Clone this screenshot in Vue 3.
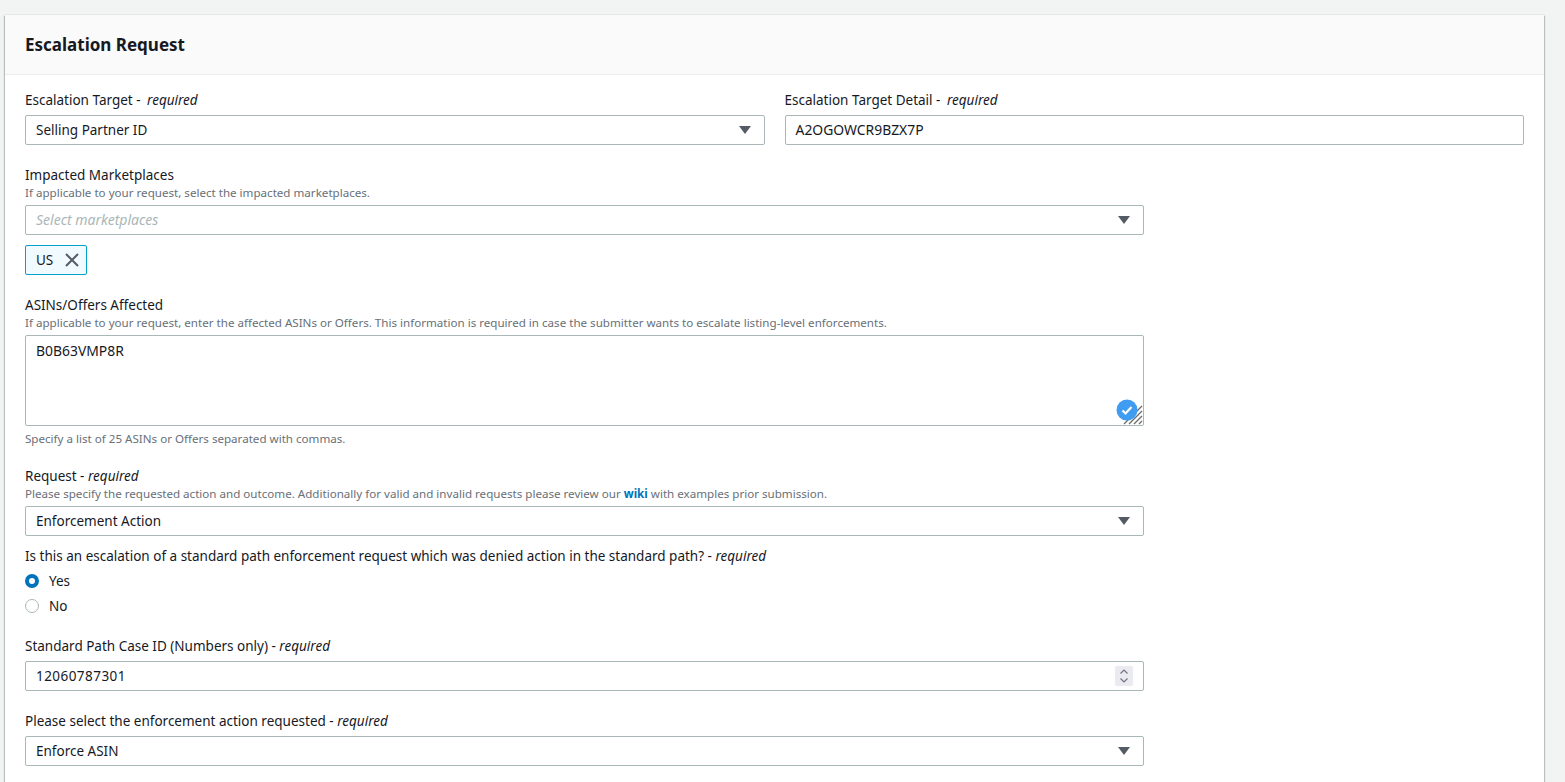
<template>
  <div class="page">
    <section class="card">
      <header class="card-header">
        <h2>Escalation Request</h2>
      </header>
      <div class="card-body">
        <div class="grid-two">
          <div class="field">
            <label>Escalation Target - <i class="wide">required</i></label>
            <div class="control select">
              <span>Selling Partner ID</span>
              <span class="caret"></span>
            </div>
          </div>
          <div class="field">
            <label>Escalation Target Detail - <i class="wide">required</i></label>
            <div class="control"><span class="code">A2OGOWCR9BZX7P</span></div>
          </div>
        </div>

        <div class="narrow">
          <div class="field gap-top">
            <label>Impacted Marketplaces</label>
            <p class="desc">If applicable to your request, select the impacted marketplaces.</p>
            <div class="control select">
              <span class="placeholder">Select marketplaces</span>
              <span class="caret"></span>
            </div>
            <div class="token">
              <span>US</span>
              <svg width="16" height="16" viewBox="0 0 16 16">
                <path d="M2 2l12 12M14 2L2 14" fill="none" stroke="#545b64" stroke-width="2" />
              </svg>
            </div>
          </div>

          <div class="field gap-top">
            <label>ASINs/Offers Affected</label>
            <p class="desc">If applicable to your request, enter the affected ASINs or Offers. This information is required in case the submitter wants to escalate listing-level enforcements.</p>
            <div class="control textarea">
              <span class="code">B0B63VMP8R</span>
              <svg class="resize" width="20" height="20" viewBox="0 0 20 20">
                <path d="M1 19L19 1M6 19L19 6M11 19l8-8M16 19l3-3" fill="none" stroke="#6b6b6b" stroke-width="1.3" />
              </svg>
              <svg class="check" width="22" height="22" viewBox="0 0 22 22">
                <circle cx="11" cy="11" r="10.5" fill="#3f9cf0" />
                <path d="M6.5 11.5l3 3 6-6.5" fill="none" stroke="#fff" stroke-width="2.2" />
              </svg>
            </div>
            <p class="hint">Specify a list of 25 ASINs or Offers separated with commas.</p>
          </div>

          <div class="field request">
            <label>Request - <i>required</i></label>
            <p class="desc">Please specify the requested action and outcome. Additionally for valid and invalid requests please review our <a href="#">wiki</a> with examples prior submission.</p>
            <div class="control select">
              <span>Enforcement Action</span>
              <span class="caret"></span>
            </div>
          </div>

          <div class="field question">
            <label class="tight">Is this an escalation of a standard path enforcement request which was denied action in the standard path? - <i>required</i></label>
            <div class="radio-row">
              <span class="radio checked"></span>
              <span>Yes</span>
            </div>
            <div class="radio-row">
              <span class="radio"></span>
              <span>No</span>
            </div>
          </div>

          <div class="field case-id">
            <label>Standard Path Case ID (Numbers only) - <i>required</i></label>
            <div class="control select">
              <span class="number">12060787301</span>
              <span class="spinner">
                <svg width="16" height="20" viewBox="0 0 16 20">
                  <path d="M4.5 7.5L8 4l3.5 3.5M4.5 12.5L8 16l3.5-3.5" fill="none" stroke="#6f7580" stroke-width="1.2" />
                </svg>
              </span>
            </div>
          </div>

          <div class="field gap-top">
            <label>Please select the enforcement action requested - <i>required</i></label>
            <div class="control select">
              <span>Enforce ASIN</span>
              <span class="caret"></span>
            </div>
          </div>
        </div>
      </div>
    </section>
  </div>
</template>

<script setup>
</script>

<style>
html,
body {
  margin: 0;
  background: #f2f3f3;
  overflow: hidden;
}
</style>

<style scoped>
.page {
  height: 782px;
  padding: 15px 21px 0 5px;
  box-sizing: border-box;
  font-family: "Noto Sans", "Open Sans", sans-serif;
  font-size: 13.5px;
  line-height: 22px;
  color: #16191f;
  overflow: hidden;
}

.card {
  background: #fff;
  box-shadow: 0 0 1px 0 rgba(0, 28, 36, 0.3), 1px 1px 1px 0 rgba(0, 28, 36, 0.2), -1px 1px 1px 0 rgba(0, 28, 36, 0.2);
  height: 800px;
}

.card-header {
  background: #fafafa;
  border-bottom: 1px solid #eaeded;
  height: 60px;
  padding: 0 20px;
  display: flex;
  align-items: center;
  box-sizing: border-box;
}

.card-header h2 {
  margin: 0;
  font-size: 17px;
  font-weight: 700;
  line-height: 22px;
}

.card-body {
  padding: 14px 20px 0;
}

.grid-two {
  display: grid;
  grid-template-columns: 1fr 1fr;
  gap: 20px;
}

.narrow {
  width: 1119px;
}

.gap-top {
  margin-top: 19px;
}

.request {
  margin-top: 18px;
}

.question {
  margin-top: 9px;
}

.case-id {
  margin-top: 17px;
}

label {
  display: block;
  margin-bottom: 4px;
}

label.tight {
  margin-bottom: 1px;
}

i.wide {
  margin-left: 3px;
}

.desc {
  font-size: 11.6px;
  line-height: 16px;
  color: #687078;
  margin: -5px 0 4px;
}

.hint {
  font-size: 11.6px;
  line-height: 16px;
  color: #687078;
  margin: 5px 0 0;
}

.desc a {
  color: #0073bb;
  font-weight: 700;
  text-decoration: none;
}

.control {
  height: 30px;
  border: 1px solid #aab7b8;
  border-radius: 2px;
  box-sizing: border-box;
  padding: 0 10px;
  display: flex;
  align-items: center;
  justify-content: space-between;
  background: #fff;
}

.code {
  font-size: 13.9px;
}

.number {
  letter-spacing: 0.45px;
}

.placeholder {
  color: #aab7b8;
  font-style: italic;
  font-size: 14px;
}

.caret {
  width: 0;
  height: 0;
  border-left: 6px solid transparent;
  border-right: 6px solid transparent;
  border-top: 8px solid #545b64;
  margin-right: 3px;
}

.token {
  margin-top: 10px;
  width: 62px;
  height: 30px;
  box-sizing: border-box;
  border: 1px solid #00a1c9;
  border-radius: 2px;
  background: #f1faff;
  display: flex;
  align-items: center;
  justify-content: space-between;
  padding: 0 6px 0 10px;
}

.textarea {
  height: 91px;
  align-items: flex-start;
  padding-top: 4px;
  position: relative;
}

.resize {
  position: absolute;
  right: 0;
  bottom: 0;
}

.check {
  position: absolute;
  right: 5px;
  bottom: 4px;
}

.radio-row {
  display: flex;
  align-items: center;
  gap: 10px;
  height: 25px;
}

.radio {
  width: 14px;
  height: 14px;
  border: 1px solid #aab7b8;
  border-radius: 50%;
  box-sizing: border-box;
  background: #fff;
}

.radio.checked {
  border: 4px solid #0073bb;
}

.spinner {
  width: 18px;
  height: 20px;
  background: #eaeaf0;
  border-radius: 2px;
  display: flex;
  align-items: center;
  justify-content: center;
}
</style>
